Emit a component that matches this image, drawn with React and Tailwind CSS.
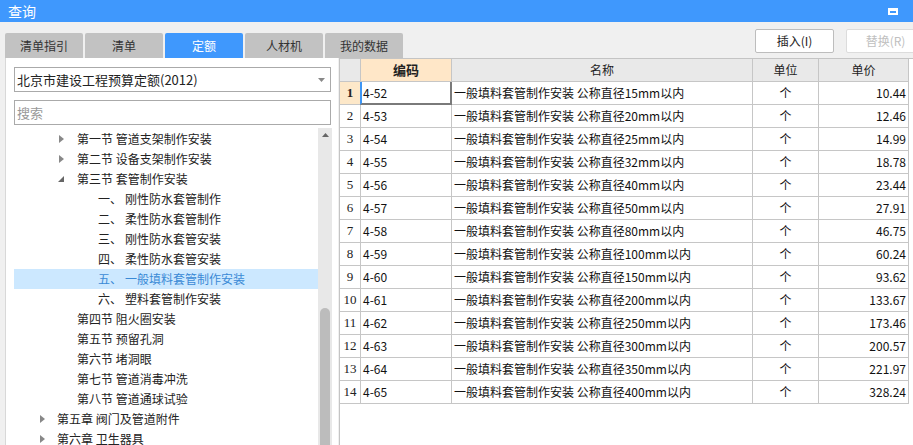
import React from "react";

const tabs = ["清单指引", "清单", "定额", "人材机", "我的数据"];

const tree = [
  { lv: 1, arrow: "right", text: "第一节 管道支架制作安装" },
  { lv: 1, arrow: "right", text: "第二节 设备支架制作安装" },
  { lv: 1, arrow: "down", text: "第三节 套管制作安装" },
  { lv: 2, no: "一、", text: "刚性防水套管制作" },
  { lv: 2, no: "二、", text: "柔性防水套管制作" },
  { lv: 2, no: "三、", text: "刚性防水套管安装" },
  { lv: 2, no: "四、", text: "柔性防水套管安装" },
  { lv: 2, no: "五、", text: "一般填料套管制作安装", sel: true },
  { lv: 2, no: "六、", text: "塑料套管制作安装" },
  { lv: 1, text: "第四节 阻火圈安装" },
  { lv: 1, text: "第五节 预留孔洞" },
  { lv: 1, text: "第六节 堵洞眼" },
  { lv: 1, text: "第七节 管道消毒冲洗" },
  { lv: 1, text: "第八节 管道通球试验" },
  { lv: 0, arrow: "right", text: "第五章 阀门及管道附件" },
  { lv: 0, arrow: "right", text: "第六章 卫生器具" },
];

const sizes = ["15", "20", "25", "32", "40", "50", "80", "100", "150", "200", "250", "300", "350", "400"];
const prices = ["10.44", "12.46", "14.99", "18.78", "23.44", "27.91", "46.75", "60.24", "93.62", "133.67", "173.46", "200.57", "221.97", "328.24"];
const rows = sizes.map((s, i) => ({
  code: `4-${52 + i}`,
  name: `一般填料套管制作安装 公称直径${s}mm以内`,
  unit: "个",
  price: prices[i],
}));

function Arrow({ dir }) {
  if (dir === "down") {
    return (
      <svg width="6" height="6" viewBox="0 0 6 6" className="block">
        <polygon points="6,0 6,6 0,6" fill="#666" />
      </svg>
    );
  }
  return (
    <svg width="5" height="8" viewBox="0 0 5 8" className="block">
      <polygon points="0,0 5,4 0,8" fill="#888" />
    </svg>
  );
}

export default function App() {
  const font = { fontFamily: '"Noto Sans CJK SC", "Noto Sans", sans-serif' };
  return (
    <div className="w-[913px] h-[445px] overflow-hidden bg-[#f0f0f0] text-[#333]" style={font}>
      {/* title bar */}
      <div className="h-[22px] bg-[#3f98fd] flex items-center justify-between pl-[8px] pr-[15px]">
        <span className="text-white text-[14px] leading-none">查询</span>
        <div className="w-[10px] h-[7px] border-2 border-t-[3px] border-white" />
      </div>

      <div className="flex">
        {/* left */}
        <div className="ml-[5px] w-[333px] shrink-0 relative z-10">
          <div className="flex gap-[2px] mt-[11px] h-[25px]">
            {tabs.map((t) => (
              <div
                key={t}
                className={
                  "w-[78px] shrink-0 rounded-t-[2px] flex items-center justify-center text-[12px] " +
                  (t === "定额" ? "bg-[#3f98fd] text-white" : "bg-[#c2c2c2] text-[#333]")
                }
              >
                {t}
              </div>
            ))}
          </div>
          <div className="bg-white h-[387px] border-l border-[#d8d8d8] overflow-hidden">
            <div className="ml-[8px] mt-[9px] w-[317px] h-[25px] border border-[#aaa] flex items-center justify-between pl-[2px] pr-[5px]">
              <span className="text-[13px] text-[#222]">北京市建设工程预算定额(2012)</span>
              <svg width="7" height="4" viewBox="0 0 7 4">
                <polygon points="0,0 7,0 3.5,4" fill="#888" />
              </svg>
            </div>
            <div className="ml-[8px] mt-[8px] w-[317px] h-[25px] border border-[#aaa] flex items-center pl-[2px]">
              <span className="text-[13px] text-[#999]">搜索</span>
            </div>
            <div className="flex ml-[8px] mt-[3px]">
              <div className="w-[304px] pt-[1px]">
                {tree.map((n, i) => (
                  <div
                    key={i}
                    className={
                      "h-[20px] flex items-center text-[12px] whitespace-nowrap " +
                      (n.sel ? "bg-[#cce8ff] text-[#3a8ad6]" : "text-[#222]")
                    }
                  >
                    {n.lv === 0 && (
                      <>
                        <span className="w-[43px] shrink-0 flex justify-end pr-[12px]">{n.arrow && <Arrow dir={n.arrow} />}</span>
                        <span>{n.text}</span>
                      </>
                    )}
                    {n.lv === 1 && (
                      <>
                        <span className="w-[63px] shrink-0 flex justify-end pr-[13px]">
                          {n.arrow && <Arrow dir={n.arrow} />}
                        </span>
                        <span>{n.text}</span>
                      </>
                    )}
                    {n.lv === 2 && (
                      <>
                        <span className="w-[84px] shrink-0" />
                        <span className="w-[27px] shrink-0">{n.no}</span>
                        <span>{n.text}</span>
                      </>
                    )}
                  </div>
                ))}
              </div>
              <div className="w-[14px] h-[320px] bg-[#e8e8e8] relative flex flex-col items-center">
                <svg width="7" height="4" viewBox="0 0 7 4" className="mt-[5px]">
                  <polygon points="3.5,0 7,4 0,4" fill="#666" />
                </svg>
                <div className="absolute left-[2px] top-[180px] w-[10px] h-[200px] bg-[#bcbcbc] rounded-t-[5px]" />
              </div>
            </div>
          </div>
        </div>

        {/* right */}
        <div className="ml-[1px] flex-1">
          <div className="h-[36px] flex items-start pt-[7px] pl-[416px] gap-[12px]">
            <div className="w-[79px] h-[24px] shrink-0 bg-white border border-[#bdbdbd] rounded-[2px] flex items-center justify-center text-[12px] text-[#222]">
              插入(I)
            </div>
            <div className="w-[79px] h-[24px] shrink-0 bg-white border border-[#dcdcdc] rounded-[2px] flex items-center justify-center text-[12px] text-[#c0c0c0]">
              替换(R)
            </div>
          </div>
          <div className="bg-white h-[387px] border-l border-t border-[#c4c4c4]">
            <div className="grid grid-cols-[21px_91px_301px_66px_89px] w-[569px] border-r border-[#c6c6c6] text-[12px]">
              <div className="h-[23px] bg-[#e9e9e9] border-r border-b border-[#c6c6c6]" />
              <div className="h-[23px] bg-[#ffe7c8] border-r border-b border-[#c6c6c6] flex items-center justify-center font-bold text-[13px] text-[#222]">
                编码
              </div>
              <div className="h-[23px] bg-[#e9e9e9] border-r border-b border-[#c6c6c6] flex items-center justify-center text-[12px] text-[#222]">
                名称
              </div>
              <div className="h-[23px] bg-[#e9e9e9] border-r border-b border-[#c6c6c6] flex items-center justify-center text-[12px] text-[#222]">
                单位
              </div>
              <div className="h-[23px] bg-[#e9e9e9] border-b border-[#c6c6c6] flex items-center justify-center text-[12px] text-[#222]">
                单价
              </div>
              {rows.map((r, i) => (
                <React.Fragment key={r.code}>
                  <div
                    className={
                      "h-[23px] border-r border-b border-[#c6c6c6] flex items-center justify-center text-[13px] text-[#222] " +
                      (i === 0 ? "bg-[#fde8c9] font-bold" : "bg-white")
                    }
                    style={{ fontFamily: '"Liberation Serif", serif' }}
                  >
                    {i + 1}
                  </div>
                  <div className="h-[23px] border-r border-b border-[#c6c6c6] flex items-center pl-[2px] text-[#111] relative">
                    {r.code}
                    {i === 0 && (
                      <div className="absolute -left-px top-0 -right-px -bottom-px border-l-2 border-l-[#3d96f5] border-r-2 border-b-2 border-r-[#7a7a7a] border-b-[#7a7a7a]" />
                    )}
                  </div>
                  <div className="h-[23px] border-r border-b border-[#c6c6c6] flex items-center pl-[2px] text-[#111] whitespace-nowrap">
                    {r.name}
                  </div>
                  <div className="h-[23px] border-r border-b border-[#c6c6c6] flex items-center justify-center text-[#111]">
                    {r.unit}
                  </div>
                  <div className="h-[23px] border-b border-[#c6c6c6] flex items-center justify-end pr-[2px] text-[#111]">
                    {r.price}
                  </div>
                </React.Fragment>
              ))}
            </div>
          </div>
        </div>
      </div>
    </div>
  );
}
